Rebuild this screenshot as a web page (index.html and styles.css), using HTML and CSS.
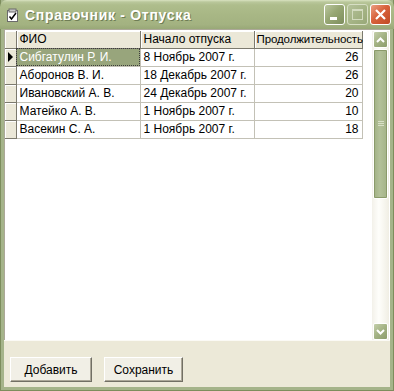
FILE: index.html
```html
<!DOCTYPE html>
<html lang="ru">
<head>
<meta charset="UTF-8">
<title>Справочник - Отпуска</title>
<link rel="stylesheet" href="styles.css">
</head>
<body>
<div class="window">
    <div class="titlebar">
        <svg class="app-icon" width="14" height="15" viewBox="0 0 14 15">
            <rect x="1.5" y="2.5" width="10" height="11" fill="#fff" stroke="#6b6b6b"/>
            <rect x="3" y="1" width="7" height="3" fill="#c9c9c9" stroke="#6b6b6b" stroke-width="1"/>
            <path d="M3.5 8.5 L5.5 11 L10 5" fill="none" stroke="#000" stroke-width="1.5"/>
        </svg>
        <span class="title">Справочник - Отпуска</span>
        <div class="caption-buttons">
            <div class="cap-btn min"><span class="min-bar"></span></div>
            <div class="cap-btn max disabled"><span class="max-box"></span></div>
            <div class="cap-btn close">
                <svg width="13" height="13" viewBox="0 0 13 13">
                    <path d="M2 2 L11 11 M11 2 L2 11" stroke="#fff" stroke-width="2.2"/>
                </svg>
            </div>
        </div>
    </div>

    <div class="client">
        <div class="grid">
            <div class="grid-body">
                <table class="data">
                    <thead>
                        <tr>
                            <th class="rowhead"></th>
                            <th class="c1">ФИО</th>
                            <th class="c2">Начало отпуска</th>
                            <th class="c3">Продолжительность</th>
                        </tr>
                    </thead>
                    <tbody>
                        <tr class="current">
                            <td class="rowhead"><span class="pointer"></span></td>
                            <td class="selected">Сибгатулин Р. И.</td>
                            <td>8 Ноябрь 2007 г.</td>
                            <td class="num">26</td>
                        </tr>
                        <tr>
                            <td class="rowhead"></td>
                            <td>Аборонов В. И.</td>
                            <td>18 Декабрь 2007 г.</td>
                            <td class="num">26</td>
                        </tr>
                        <tr>
                            <td class="rowhead"></td>
                            <td>Ивановский А. В.</td>
                            <td>24 Декабрь 2007 г.</td>
                            <td class="num">20</td>
                        </tr>
                        <tr>
                            <td class="rowhead"></td>
                            <td>Матейко А. В.</td>
                            <td>1 Ноябрь 2007 г.</td>
                            <td class="num">10</td>
                        </tr>
                        <tr>
                            <td class="rowhead"></td>
                            <td>Васекин С. А.</td>
                            <td>1 Ноябрь 2007 г.</td>
                            <td class="num">18</td>
                        </tr>
                    </tbody>
                </table>
            </div>
            <div class="vscroll">
                <div class="sb-btn">
                    <svg width="9" height="6" viewBox="0 0 9 6"><path d="M1 5 L4.5 1.5 L8 5" fill="none" stroke="#fff" stroke-width="2"/></svg>
                </div>
                <div class="sb-thumb"><span class="grip"></span></div>
                <div class="sb-track"></div>
                <div class="sb-btn">
                    <svg width="9" height="6" viewBox="0 0 9 6"><path d="M1 1 L4.5 4.5 L8 1" fill="none" stroke="#fff" stroke-width="2"/></svg>
                </div>
            </div>
        </div>

        <div class="panel">
            <button class="btn">Добавить</button>
            <button class="btn">Сохранить</button>
        </div>
    </div>
</div>
</body>
</html>
```

FILE: styles.css
```css
body {
    margin: 0;
    padding: 0;
    font-family: "Liberation Sans", Arial, sans-serif;
    background: #fff;
}
.window {
    width: 394px;
    height: 391px;
    display: flex;
    flex-direction: column;
    box-sizing: border-box;
    background: #a5b48a;
    border: 1px solid #7d8d5d;
    border-top: none;
}
.titlebar {
    height: 29px;
    flex: none;
    display: flex;
    align-items: center;
    margin: 0 -1px;
    padding: 0 3px 0 6px;
    border-radius: 7px 7px 0 0;
    background: linear-gradient(#d9e2c1 0, #b9c79b 2px, #aebd8c 5px, #a8b785 50%, #a3b281 85%, #98a877 100%);
}
.app-icon {
    margin-right: 5px;
    margin-top: 1px;
}
.title {
    flex: 1;
    color: #fff;
    font-weight: bold;
    font-size: 14px;
    text-shadow: 1px 1px 0 #6f7d55;
    letter-spacing: 0.7px;
}
.caption-buttons {
    display: flex;
    gap: 2px;
}
.cap-btn {
    width: 19px;
    height: 19px;
    border: 1px solid #fff;
    border-radius: 3px;
    display: flex;
    align-items: center;
    justify-content: center;
    position: relative;
    background: linear-gradient(135deg, #bac69e 0, #97a774 45%, #7e8e5d 100%);
}
.cap-btn.disabled {
    border-color: #d7dfc4;
    background: linear-gradient(135deg, #b5c29a 0, #a3b283 60%, #98a878 100%);
}
.min-bar {
    position: absolute;
    left: 5px;
    bottom: 4px;
    width: 7px;
    height: 3px;
    background: #fff;
}
.max-box {
    width: 9px;
    height: 8px;
    border: 1px solid #d3dbbf;
    border-top-width: 2px;
}
.cap-btn.close {
    background: linear-gradient(135deg, #eba083 0, #d8623c 45%, #c04a24 100%);
}
.client {
    flex: 1;
    display: flex;
    flex-direction: column;
    margin: 0 3px 3px;
    background: #ece9d8;
}
.grid {
    flex: 1;
    display: flex;
    background: #fff;
    border-top: 1px solid #aca899;
    border-left: 1px solid #aca899;
    padding-top: 1px;
}
.grid-body {
    flex: 1;
    overflow: hidden;
}
table.data {
    border-collapse: collapse;
    table-layout: fixed;
    width: 357px;
    font-size: 12px;
}
.data th, .data td {
    height: 17px;
    padding: 0 3px;
    white-space: nowrap;
    overflow: hidden;
    text-align: left;
    font-weight: normal;
    color: #000;
    box-sizing: border-box;
}
.data th {
    height: 17px;
    background: #ebe8d8;
    border-right: 1px solid #7c7a6e;
    border-bottom: 1px solid #7c7a6e;
    box-shadow: inset 1px 1px 0 #fff;
}
.data th.c3 {
    padding: 0 0 0 2px;
    font-size: 11.5px;
    letter-spacing: -0.1px;
    overflow: visible;
}
.data td {
    height: 18px;
    border-right: 1px solid #c3c1b6;
    border-bottom: 1px solid #c3c1b6;
}
.data .rowhead {
    width: 11px;
    padding: 0;
    background: #ebe8d8;
    border-right: 1px solid #7c7a6e;
    border-bottom: 1px solid #7c7a6e;
    box-shadow: inset 1px 1px 0 #fff;
}
.data .c1 { width: 124px; }
.data .c2 { width: 114px; }
.data .c3 { width: 108px; }
.data td.num {
    text-align: right;
    padding-right: 3px;
}
.data td.selected {
    background: #98a57c;
    color: #fff;
    outline: 1px dotted #3c3c3c;
    outline-offset: -1px;
}
.pointer {
    display: block;
    margin-left: 3px;
    width: 0;
    height: 0;
    border-top: 5px solid transparent;
    border-bottom: 5px solid transparent;
    border-left: 5px solid #000;
}
.vscroll {
    width: 17px;
    margin-right: 1px;
    display: flex;
    flex-direction: column;
    background: linear-gradient(90deg, #f3f1ea, #fefefb 40%, #f0eee4);
}
.sb-btn {
    height: 15px;
    flex: none;
    margin: 0 1px;
    border: 1px solid #fff;
    border-radius: 2px;
    display: flex;
    align-items: center;
    justify-content: center;
    background: linear-gradient(135deg, #c4cfaa 0, #a3b283 50%, #8d9d6c 100%);
}
.sb-thumb {
    height: 150px;
    flex: none;
    margin: 1px 1px 0;
    box-sizing: border-box;
    border: 1px solid #fff;
    outline: 1px solid #8a9a6a;
    outline-offset: -2px;
    border-radius: 2px;
    display: flex;
    align-items: center;
    justify-content: center;
    background: linear-gradient(90deg, #a1b184, #b3c199 45%, #a4b388);
}
.grip {
    width: 6px;
    height: 6px;
    background: repeating-linear-gradient(#d8e0c6 0 1px, transparent 1px 2px);
}
.sb-track {
    flex: 1;
}
.panel {
    height: 47px;
    flex: none;
    display: flex;
    align-items: flex-end;
    gap: 12px;
    padding: 0 0 5px 6px;
    box-sizing: border-box;
    border-top: 1px solid #fbfaf5;
}
.btn {
    width: 82px;
    height: 25px;
    padding: 0;
    font-family: "Liberation Sans", Arial, sans-serif;
    font-size: 12px;
    color: #000;
    background: #f1efe6;
    border: 1px solid;
    border-color: #fff #716f64 #716f64 #fff;
    box-shadow: inset -1px -1px 0 #aca899;
}
.btn + .btn {
    width: 79px;
}
```
